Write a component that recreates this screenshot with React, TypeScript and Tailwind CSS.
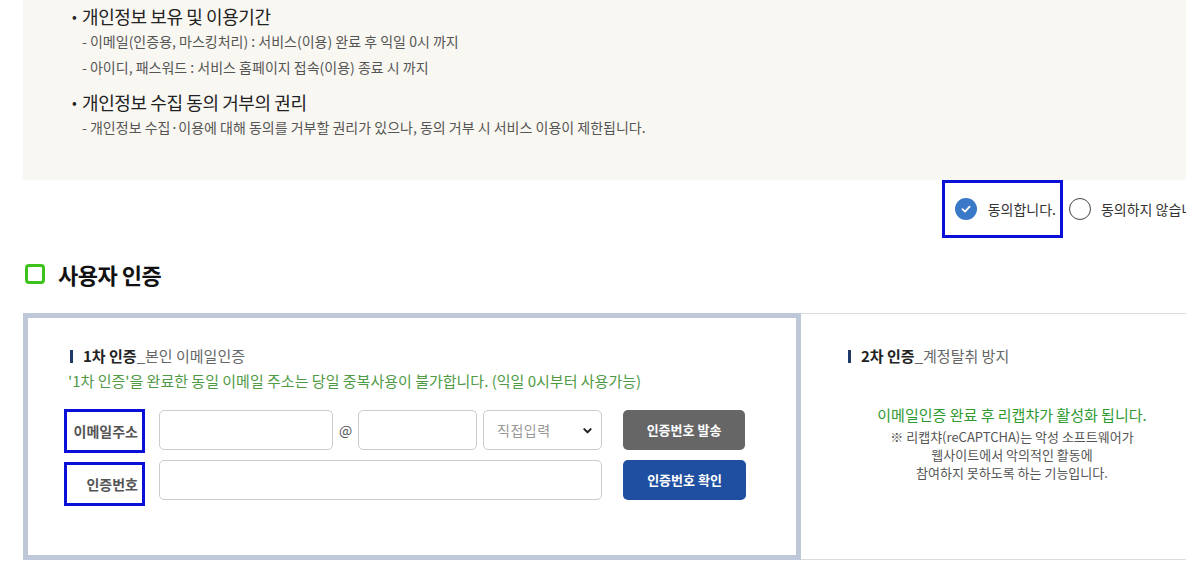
import React from 'react';

const font = "font-['Noto_Sans_CJK_KR','Noto_Sans',sans-serif]";

const Bullet: React.FC<{ title: string; children: React.ReactNode; className?: string }> = ({ title, children, className }) => (
    <div className={className}>
        <div className="flex items-center h-[24px] text-[18px] text-[#222] tracking-[-0.4px]">
            <span className="w-[10px] text-[14px]">•</span>
            <span>{title}</span>
        </div>
        <div className="pl-[10px] text-[14px] text-[#555]">{children}</div>
    </div>
);

const SubTitle: React.FC<{ strong: string; rest: string }> = ({ strong, rest }) => (
    <div className="flex items-center h-[20px] text-[15px]">
        <span className="w-[3px] h-[13px] bg-[#1f3a68]" />
        <span className="ml-[10px] font-bold text-[#222]">{strong}</span>
        <span className="text-[#666]">_{rest}</span>
    </div>
);

const Label: React.FC<{ text: string; className?: string }> = ({ text, className }) => (
    <div className={`w-[81px] h-[44px] border-[3px] border-[#0a10d8] flex items-center justify-end pr-[4px] text-[14px] font-bold text-[#555] ${className ?? ''}`}>
        {text}
    </div>
);

export default function App() {
    return (
        <div className={`w-full h-[577px] overflow-hidden bg-white ${font}`}>
            <div className="w-[1200px] ml-[23px]">
                {/* 안내 박스 */}
                <div className="h-[180px] bg-[#f9f7f1] pl-[49px] pt-[4px]">
                    <Bullet title="개인정보 보유 및 이용기간">
                        <p className="leading-[26px]">- 이메일(인증용, 마스킹처리) : 서비스(이용) 완료 후 익일 0시 까지</p>
                        <p className="leading-[26px]">- 아이디, 패스워드 : 서비스 홈페이지 접속(이용) 종료 시 까지</p>
                    </Bullet>
                    <Bullet title="개인정보 수집 동의 거부의 권리" className="mt-[10px]">
                        <p className="leading-[26px]">- 개인정보 수집·이용에 대해 동의를 거부할 권리가 있으나, 동의 거부 시 서비스 이용이 제한됩니다.</p>
                    </Bullet>
                </div>

                {/* 동의 */}
                <div className="h-[58px] flex items-center justify-end pr-[12px] text-[14px] text-[#333]">
                    <div className="h-[58px] border-[3px] border-[#0a10d8] flex items-center pl-[10px] pr-[4px]">
                        <span className="w-[22px] h-[22px] rounded-full bg-[#3a78c8] flex items-center justify-center">
                            <svg width="12" height="12" viewBox="0 0 12 12" fill="none">
                                <path d="M2.5 6.2 L5 8.6 L9.6 3.6" stroke="white" strokeWidth="1.8" strokeLinecap="round" strokeLinejoin="round" />
                            </svg>
                        </span>
                        <span className="ml-[11px]">동의합니다.</span>
                    </div>
                    <span className="ml-[6px] w-[22px] h-[22px] rounded-full border border-[#444] bg-white" />
                    <span className="ml-[10px]">동의하지 않습니다.</span>
                </div>

                {/* 사용자 인증 */}
                <div className="mt-[21px] h-[30px] flex items-center">
                    <span className="ml-[2px] w-[20px] h-[20px] rounded-[4px] border-[3px] border-[#3dc21b]" />
                    <h2 className="ml-[13px] text-[22px] font-bold text-[#111] tracking-[-0.5px]">사용자 인증</h2>
                </div>

                <div className="mt-[24px] flex">
                    {/* 1차 인증 */}
                    <div className="w-[778px] h-[247px] border-[5px] border-[#bfc8d8] pt-[28px] pl-[42px]">
                        <SubTitle strong="1차 인증" rest="본인 이메일인증" />
                        <p className="mt-[5px] ml-[-2px] text-[15px] leading-[20px] text-[#4f9a45]">
                            '1차 인증'을 완료한 동일 이메일 주소는 당일 중복사용이 불가합니다. (익일 0시부터 사용가능)
                        </p>

                        <div className="mt-[18px] ml-[-6px] flex items-start">
                            <Label text="이메일주소" />
                            <div className="mt-[1px] ml-[14px] flex items-center">
                                <div className="w-[174px] h-[40px] border border-[#ccc] rounded-[5px] bg-white" />
                                <span className="w-[25px] text-center text-[14px] text-[#555]">@</span>
                                <div className="w-[119px] h-[40px] border border-[#ccc] rounded-[5px] bg-white" />
                                <div className="ml-[6px] w-[119px] h-[40px] border border-[#ccc] rounded-[5px] bg-white flex items-center justify-between pl-[13px] pr-[8px] text-[14px] text-[#999] tracking-[0.5px]">
                                    <span>직접입력</span>
                                    <svg width="11" height="11" viewBox="0 0 12 12" fill="none">
                                        <path d="M2.5 4.5 L6 8 L9.5 4.5" stroke="#222" strokeWidth="2.2" strokeLinecap="round" strokeLinejoin="round" />
                                    </svg>
                                </div>
                                <button className="ml-[21px] w-[122px] h-[40px] rounded-[5px] bg-[#666666] text-white text-[13px] font-bold">
                                    인증번호 발송
                                </button>
                            </div>
                        </div>

                        <div className="mt-[7px] ml-[-6px] flex items-start">
                            <Label text="인증번호" className="mt-[2px]" />
                            <div className="ml-[14px] flex items-center">
                                <div className="w-[443px] h-[40px] border border-[#ccc] rounded-[5px] bg-white" />
                                <button className="ml-[21px] w-[123px] h-[40px] rounded-[5px] bg-[#1f4fa0] text-white text-[13px] font-bold">
                                    인증번호 확인
                                </button>
                            </div>
                        </div>
                    </div>

                    {/* 2차 인증 */}
                    <div className="flex-1 h-[247px] border-y border-[#dcdcdc] pt-[32px] pl-[47px]">
                        <SubTitle strong="2차 인증" rest="계정탈취 방지" />
                        <div className="mt-[39px] ml-[-47px] text-center">
                            <p className="text-[15px] leading-[20px] text-[#2f9a30]">이메일인증 완료 후 리캡챠가 활성화 됩니다.</p>
                            <p className="mt-[3px] text-[13px] leading-[18px] text-[#555]">
                                ※ 리캡챠(reCAPTCHA)는 악성 소프트웨어가<br />
                                웹사이트에서 악의적인 활동에<br />
                                참여하지 못하도록 하는 기능입니다.
                            </p>
                        </div>
                    </div>
                </div>
            </div>
        </div>
    );
}
